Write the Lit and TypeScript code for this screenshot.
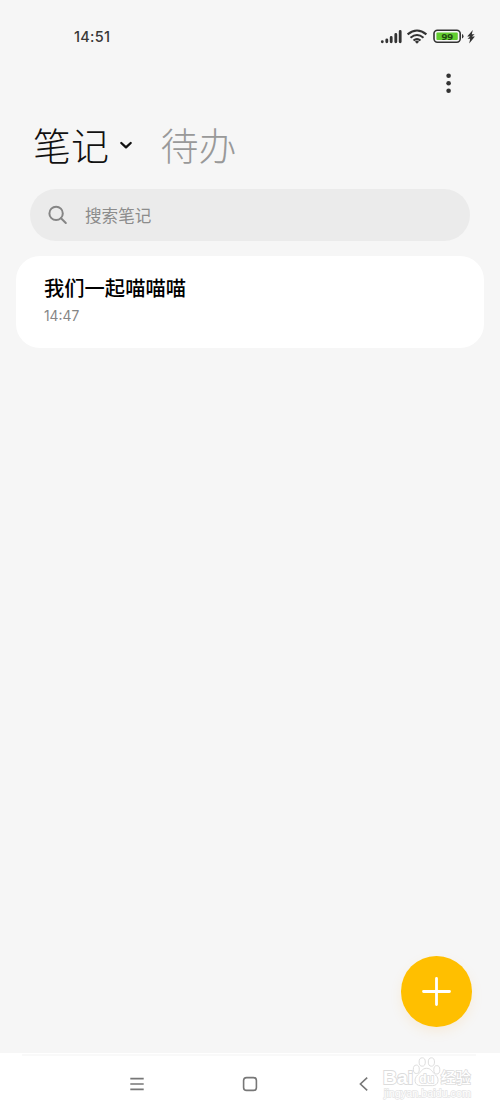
import { LitElement, html, css } from "lit";
import { customElement } from "lit/decorators.js";

@customElement("status-bar")
class StatusBar extends LitElement {
  static styles = css`
    :host { display: flex; height: 52px; padding: 22px 24px 0 74px; box-sizing: border-box; justify-content: space-between; }
    .time { font: 500 14.5px/30px Inter, sans-serif; color: #383838; letter-spacing: 0.25px; }
    .icons { width: 96px; height: 28px; display: block; }
    .level { font: 700 9.5px "Noto Sans", sans-serif; fill: #1f4a10; }
  `;
  render() {
    return html`<div class="time">14:51</div>
      <svg class="icons" viewBox="380 22 96 28">
        <g stroke="#333" stroke-width="2.8" stroke-linecap="round">
          <path d="M382.3 41.6V41.8M386.8 39.8V41.8M391.2 37.5V41.8M395.8 34.5V41.8M400.2 31.5V41.8" />
        </g>
        <g fill="none" stroke="#333" stroke-width="2.1">
          <path d="M407.6 34.4Q417 26.6 426.4 34.4M410.5 37.7Q417 32.3 423.5 37.7M413.5 40.5Q417 37.6 420.5 40.5" />
        </g>
        <path d="M414.9 41.7Q417 40 419.1 41.7L417 43.7Z" fill="#333" />
        <rect x="434" y="30.2" width="26.2" height="12" rx="3.4" fill="#f7f7f7" stroke="#333" stroke-width="1.6" />
        <rect x="436.4" y="32.6" width="21.4" height="7.3" rx="1" fill="#63cd30" />
        <path d="M462 34Q463.5 34.2 463.5 36.2T462 38.4Z" fill="#333" />
        <text class="level" x="447.2" y="39.6" text-anchor="middle" textLength="11.5" lengthAdjust="spacingAndGlyphs">99</text>
        <path d="M472.8 30L467.2 36.6H470.2L467.6 38.8H470.2L469.2 43.4L474.9 36.6H471.9L474.6 34.2H471.8Z" fill="#333" />
      </svg>`;
  }
}

@customElement("nav-bar")
class NavBar extends LitElement {
  static styles = css`
    :host { display: block; height: 58px; background: #fff; position: relative; }
    .rule { height: 2px; margin: 0 24px 0 22px; border-top: 1px solid #fff; background: #f9f9f9; }
    .keys { display: grid; grid-template-columns: repeat(3, 113px); padding: 17.5px 0 0 80.5px; }
    .keys svg { width: 20px; height: 20px; justify-self: center; fill: none; stroke: #777; stroke-width: 1.6; }
    .mark { position: absolute; left: 380px; top: 2px; width: 96px; height: 48px; }
    .mark text { font-family: "Liberation Sans", sans-serif; fill: #fff; stroke: #dcdcdc; paint-order: stroke; }
    .brand { font-size: 19px; font-weight: 700; stroke-width: 1.8px; }
    .du { font-size: 12px; font-weight: 700; stroke-width: 1.5px; }
    .mark .cn { font-family: "Noto Sans CJK SC", sans-serif; font-size: 15px; font-weight: 500; stroke-width: 1.5px; }
    .mark .url { font-size: 10px; stroke-width: 1.3px; stroke: #e4e4e4; }
  `;
  render() {
    return html`<div class="rule"></div>
      <div class="keys">
        <svg viewBox="0 0 20 20"><path d="M3.3 4.6H16.7M3.3 10H16.7M3.3 15.4H16.7" /></svg>
        <svg viewBox="0 0 20 20"><rect x="3.6" y="3.6" width="12.8" height="12.8" rx="3" /></svg>
        <svg viewBox="0 0 20 20"><path d="M14.2 3.6L7.4 10L14.2 16.4" /></svg>
      </div>
      <svg class="mark" viewBox="380 1055 96 48">
        <text class="brand" x="383" y="1084.3" textLength="30" lengthAdjust="spacingAndGlyphs">Bai</text>
        <g fill="#fff" stroke="#dedede" stroke-width="1">
          <ellipse cx="416.3" cy="1069.3" rx="3" ry="4.2" /><ellipse cx="422.2" cy="1062" rx="3.1" ry="4.2" />
          <ellipse cx="431.4" cy="1062" rx="3.1" ry="4.2" /><ellipse cx="436.8" cy="1069.8" rx="3" ry="4.2" />
          <path d="M426.6 1068.3C422 1068.3 421 1072 417.6 1075C413.5 1078.5 414.2 1085.6 420.5 1085.6H432.5C439 1085.6 439.5 1078.5 435.6 1075C432.2 1072 431.2 1068.3 426.6 1068.3Z" />
        </g>
        <text class="du" x="419.3" y="1082.6">du</text>
        <text class="cn" x="440.7" y="1083.4">经验</text>
        <text class="url" x="384" y="1096.8" textLength="87" lengthAdjust="spacingAndGlyphs">jingyan.baidu.com</text>
      </svg>`;
  }
}

@customElement("app-root")
class AppRoot extends LitElement {
  static styles = css`
    :host { display: flex; flex-direction: column; height: 1111px; width: 500px; background: #f6f6f6; position: relative; overflow: hidden; font-family: Inter, "Noto Sans CJK SC", sans-serif; }
    .menu { display: flex; justify-content: flex-end; padding: 20px 41px 0 0; height: 24px; }
    .menu svg { width: 20px; height: 24px; fill: #333; }
    .tabs { display: flex; height: 60px; margin-top: 18px; padding-left: 33px; align-items: center; font: 300 38px/60px "Noto Sans CJK SC", sans-serif; color: #111; }
    .arrow { width: 14px; height: 10px; margin: 2px 28px 0 9.5px; fill: none; stroke: #111; stroke-width: 2.3; stroke-linecap: round; stroke-linejoin: round; }
    .todo { color: #999; }
    .search { display: flex; align-items: center; height: 52px; margin: 15px 30px 0; padding-left: 17px; box-sizing: border-box; border-radius: 26px; background: #ebebeb; color: #8c8c8c; font: 400 16.6px/52px "Noto Sans CJK SC", sans-serif; }
    .search svg { width: 22px; height: 22px; margin-right: 16px; fill: none; stroke: #858585; stroke-width: 2; stroke-linecap: round; }
    .note { height: 92px; margin: 15px 16px 0; padding: 16px 28px 0; box-sizing: border-box; background: #fff; border-radius: 24px; }
    .title { font: 500 20.3px/30px "Noto Sans CJK SC", sans-serif; color: #000; }
    .when { font: 400 13.8px/20px Inter, sans-serif; color: #858585; margin-top: 4px; }
    .space { flex: 1; }
    .add { position: absolute; left: 401px; top: 956px; width: 70.5px; height: 70.5px; border-radius: 50%; background: #ffbf00; box-shadow: 0 5px 12px rgba(255, 180, 60, 0.13); }
    .add svg { display: block; width: 70px; height: 70px; stroke: #fff; stroke-width: 2.8; stroke-linecap: round; }
  `;
  render() {
    return html`<status-bar></status-bar>
      <div class="menu"><svg viewBox="0 0 20 24"><circle cx="9.6" cy="3.8" r="2.3" /><circle cx="9.6" cy="11.3" r="2.3" /><circle cx="9.6" cy="18.8" r="2.3" /></svg></div>
      <div class="tabs">
        <span>笔记</span>
        <svg class="arrow" viewBox="0 0 14 10"><path d="M2.3 3L7 7.4L11.7 3" /></svg>
        <span class="todo">待办</span>
      </div>
      <div class="search"><svg viewBox="0 0 22 22"><circle cx="9.1" cy="9.4" r="6.7" /><path d="M14 14.3L18.8 19" /></svg><span>搜索笔记</span></div>
      <div class="note"><div class="title">我们一起喵喵喵</div><div class="when">14:47</div></div>
      <div class="space"></div>
      <nav-bar></nav-bar>
      <div class="add"><svg viewBox="0 0 70 70"><path d="M22.5 35.5H48.5M35.5 22.5V48.5" /></svg></div>`;
  }
}
